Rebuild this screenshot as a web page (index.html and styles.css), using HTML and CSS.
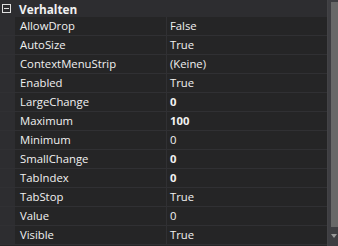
FILE: index.html
```html
<!DOCTYPE html>
<html lang="de">
<head>
  <meta charset="UTF-8" />
  <title>Eigenschaften</title>
  <link rel="stylesheet" href="styles.css">
</head>
<body>
  <div class="grid">
    <div class="props">
      <div class="category">
        <span class="toggle"><svg width="9" height="9" viewBox="0 0 9 9"><rect x="0.5" y="0.5" width="8" height="8" fill="none" stroke="#e0e0e0"/><line x1="2" y1="4.5" x2="7" y2="4.5" stroke="#e0e0e0"/></svg></span>
        <span class="cat-name">Verhalten</span>
      </div>
      <div class="row"><span class="margin"></span><span class="name">AllowDrop</span><span class="value">False</span></div>
      <div class="row"><span class="margin"></span><span class="name">AutoSize</span><span class="value">True</span></div>
      <div class="row"><span class="margin"></span><span class="name">ContextMenuStrip</span><span class="value">(Keine)</span></div>
      <div class="row"><span class="margin"></span><span class="name">Enabled</span><span class="value">True</span></div>
      <div class="row"><span class="margin"></span><span class="name">LargeChange</span><span class="value changed">0</span></div>
      <div class="row"><span class="margin"></span><span class="name">Maximum</span><span class="value changed">100</span></div>
      <div class="row"><span class="margin"></span><span class="name">Minimum</span><span class="value">0</span></div>
      <div class="row"><span class="margin"></span><span class="name">SmallChange</span><span class="value changed">0</span></div>
      <div class="row"><span class="margin"></span><span class="name">TabIndex</span><span class="value changed">0</span></div>
      <div class="row"><span class="margin"></span><span class="name">TabStop</span><span class="value">True</span></div>
      <div class="row"><span class="margin"></span><span class="name">Value</span><span class="value">0</span></div>
      <div class="row"><span class="margin"></span><span class="name">Visible</span><span class="value">True</span></div>
    </div>
    <div class="scrollbar">
      <div class="thumb"></div>
      <div class="arrow"></div>
    </div>
  </div>
</body>
</html>
```

FILE: styles.css
```css
body {
  margin: 0;
  background-color: #252526;
  font-family: "Open Sans", "Noto Sans", sans-serif;
  font-size: 11.3px;
  color: #f1f1f1;
}
.grid {
  display: flex;
  width: 338px;
  height: 246px;
  overflow: hidden;
}
.props {
  flex: 1;
  display: flex;
  flex-direction: column;
}
.category {
  display: flex;
  align-items: center;
  height: 17px;
  background-color: #2d2d30;
}
.toggle {
  width: 19px;
  display: flex;
  padding-left: 2px;
  box-sizing: border-box;
}
.toggle svg {
  display: block;
}
.cat-name {
  font-weight: bold;
  font-size: 11.8px;
}
.row {
  display: flex;
  height: 18px;
  line-height: 18px;
  border-bottom: 1px solid #303033;
}
.margin {
  width: 15px;
  flex: none;
  background-color: #2d2d30;
}
.name {
  width: 152px;
  flex: none;
  padding-left: 5px;
  box-sizing: border-box;
  border-right: 1px solid #303033;
  white-space: nowrap;
}
.value {
  flex: 1;
  padding-left: 3px;
}
.changed {
  font-weight: bold;
}
.scrollbar {
  width: 10px;
  flex: none;
  background-color: #3e3e42;
  border-left: 1px solid #434346;
  position: relative;
}
.thumb {
  margin: 2px 0 0 3px;
  height: 225px;
  background-color: #686868;
}
.arrow {
  position: absolute;
  left: 3px;
  top: 234px;
  width: 0;
  height: 0;
  border-left: 3px solid transparent;
  border-right: 3px solid transparent;
  border-top: 4px solid #999999;
}
```
